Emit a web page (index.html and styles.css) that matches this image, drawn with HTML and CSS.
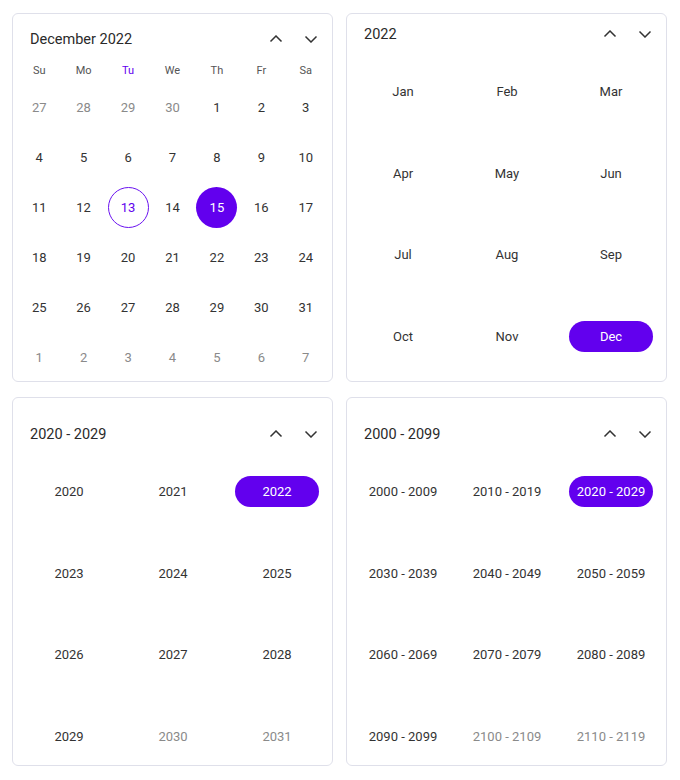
FILE: index.html
```html
<!DOCTYPE html>
<html lang="en">
<head>
<meta charset="utf-8">
<title>Calendars</title>
<link rel="stylesheet" href="styles.css">
</head>
<body>
<div class="board">
  <section class="card">
    <header class="head head-day">
      <span class="title">December 2022</span>
      <div class="nav">
        <button class="nav-btn" aria-label="Previous"><svg viewBox="0 0 14 8" width="14" height="8"><polyline points="1.5,6.5 7,1 12.5,6.5"/></svg></button>
        <button class="nav-btn" aria-label="Next"><svg viewBox="0 0 14 8" width="14" height="8"><polyline points="1.5,1.5 7,7 12.5,1.5"/></svg></button>
      </div>
    </header>
    <div class="weekdays">
      <span>Su</span><span>Mo</span><span class="today-wd">Tu</span><span>We</span><span>Th</span><span>Fr</span><span>Sa</span>
    </div>
    <div class="days">
      <span class="day muted">27</span><span class="day muted">28</span><span class="day muted">29</span><span class="day muted">30</span><span class="day">1</span><span class="day">2</span><span class="day">3</span>
      <span class="day">4</span><span class="day">5</span><span class="day">6</span><span class="day">7</span><span class="day">8</span><span class="day">9</span><span class="day">10</span>
      <span class="day">11</span><span class="day">12</span><span class="day today"><i>13</i></span><span class="day">14</span><span class="day selected"><i>15</i></span><span class="day">16</span><span class="day">17</span>
      <span class="day">18</span><span class="day">19</span><span class="day">20</span><span class="day">21</span><span class="day">22</span><span class="day">23</span><span class="day">24</span>
      <span class="day">25</span><span class="day">26</span><span class="day">27</span><span class="day">28</span><span class="day">29</span><span class="day">30</span><span class="day">31</span>
      <span class="day muted">1</span><span class="day muted">2</span><span class="day muted">3</span><span class="day muted">4</span><span class="day muted">5</span><span class="day muted">6</span><span class="day muted">7</span>
    </div>
  </section>

  <section class="card">
    <header class="head head-month">
      <span class="title">2022</span>
      <div class="nav">
        <button class="nav-btn" aria-label="Previous"><svg viewBox="0 0 14 8" width="14" height="8"><polyline points="1.5,6.5 7,1 12.5,6.5"/></svg></button>
        <button class="nav-btn" aria-label="Next"><svg viewBox="0 0 14 8" width="14" height="8"><polyline points="1.5,1.5 7,7 12.5,1.5"/></svg></button>
      </div>
    </header>
    <div class="cells">
      <span class="cell"><i>Jan</i></span><span class="cell"><i>Feb</i></span><span class="cell"><i>Mar</i></span>
      <span class="cell"><i>Apr</i></span><span class="cell"><i>May</i></span><span class="cell"><i>Jun</i></span>
      <span class="cell"><i>Jul</i></span><span class="cell"><i>Aug</i></span><span class="cell"><i>Sep</i></span>
      <span class="cell"><i>Oct</i></span><span class="cell"><i>Nov</i></span><span class="cell selected"><i>Dec</i></span>
    </div>
  </section>

  <section class="card">
    <header class="head head-year">
      <span class="title">2020 - 2029</span>
      <div class="nav">
        <button class="nav-btn" aria-label="Previous"><svg viewBox="0 0 14 8" width="14" height="8"><polyline points="1.5,6.5 7,1 12.5,6.5"/></svg></button>
        <button class="nav-btn" aria-label="Next"><svg viewBox="0 0 14 8" width="14" height="8"><polyline points="1.5,1.5 7,7 12.5,1.5"/></svg></button>
      </div>
    </header>
    <div class="cells">
      <span class="cell"><i>2020</i></span><span class="cell"><i>2021</i></span><span class="cell selected"><i>2022</i></span>
      <span class="cell"><i>2023</i></span><span class="cell"><i>2024</i></span><span class="cell"><i>2025</i></span>
      <span class="cell"><i>2026</i></span><span class="cell"><i>2027</i></span><span class="cell"><i>2028</i></span>
      <span class="cell"><i>2029</i></span><span class="cell muted"><i>2030</i></span><span class="cell muted"><i>2031</i></span>
    </div>
  </section>

  <section class="card">
    <header class="head head-year">
      <span class="title">2000 - 2099</span>
      <div class="nav">
        <button class="nav-btn" aria-label="Previous"><svg viewBox="0 0 14 8" width="14" height="8"><polyline points="1.5,6.5 7,1 12.5,6.5"/></svg></button>
        <button class="nav-btn" aria-label="Next"><svg viewBox="0 0 14 8" width="14" height="8"><polyline points="1.5,1.5 7,7 12.5,1.5"/></svg></button>
      </div>
    </header>
    <div class="cells">
      <span class="cell"><i>2000 - 2009</i></span><span class="cell"><i>2010 - 2019</i></span><span class="cell selected"><i>2020 - 2029</i></span>
      <span class="cell"><i>2030 - 2039</i></span><span class="cell"><i>2040 - 2049</i></span><span class="cell"><i>2050 - 2059</i></span>
      <span class="cell"><i>2060 - 2069</i></span><span class="cell"><i>2070 - 2079</i></span><span class="cell"><i>2080 - 2089</i></span>
      <span class="cell"><i>2090 - 2099</i></span><span class="cell muted"><i>2100 - 2109</i></span><span class="cell muted"><i>2110 - 2119</i></span>
    </div>
  </section>
</div>
</body>
</html>
```

FILE: styles.css
```css
* { box-sizing: border-box; }

html, body {
  margin: 0;
  padding: 0;
  background: #ffffff;
}

body {
  font-family: Roboto, "Liberation Sans", Arial, sans-serif;
  color: #333333;
}

.board {
  display: grid;
  grid-template-columns: 321px 321px;
  grid-template-rows: 369px 369px;
  column-gap: 13px;
  row-gap: 15px;
  padding: 13px 0 0 12px;
}

.card {
  border: 1px solid #dfe0ea;
  border-radius: 6px;
  background: #fff;
  overflow: hidden;
  display: flex;
  flex-direction: column;
}

.head {
  display: flex;
  align-items: center;
  justify-content: space-between;
  padding-left: 17px;
  padding-right: 9px;
  flex: none;
}

.head-day { height: 46px; padding-top: 4px; }
.head-month { height: 37px; padding-top: 3px; }
.head-year { height: 53px; padding-top: 19px; }

.title {
  font-size: 14.5px;
  color: #2a2a2a;
}

.nav {
  display: flex;
  gap: 11px;
}

.nav-btn {
  width: 24px;
  height: 24px;
  padding: 0;
  border: 0;
  background: transparent;
  display: flex;
  align-items: center;
  justify-content: center;
  cursor: pointer;
}

.nav-btn svg {
  display: block;
  fill: none;
  stroke: #333333;
  stroke-width: 1.5;
  stroke-linecap: butt;
  stroke-linejoin: miter;
}

.weekdays {
  display: grid;
  grid-template-columns: repeat(7, 1fr);
  height: 20px;
  padding: 0 4px;
  align-items: center;
  font-size: 11px;
  color: #555555;
  text-align: center;
  flex: none;
}

.weekdays .today-wd { color: #6200ee; }

.days {
  display: grid;
  grid-template-columns: repeat(7, 1fr);
  grid-auto-rows: 50px;
  padding: 2px 4px 0;
  font-size: 13px;
}

.day {
  display: flex;
  align-items: center;
  justify-content: center;
}

.day i {
  font-style: normal;
  width: 41px;
  height: 41px;
  border-radius: 50%;
  display: flex;
  align-items: center;
  justify-content: center;
}

.day.muted { color: #8a8a8a; }

.day.today i {
  border: 1px solid #6a12f0;
  color: #6200ee;
}

.day.selected i {
  background: #6200ee;
  color: #fff;
}

.cells {
  display: grid;
  grid-template-columns: repeat(3, 1fr);
  grid-auto-rows: 81.5px;
  padding: 0 3px 0 4px;
  font-size: 13px;
}

.cell {
  display: flex;
  align-items: center;
  justify-content: center;
}

.cell i {
  font-style: normal;
  height: 31px;
  min-width: 84px;
  padding: 0 6px;
  border-radius: 16px;
  display: flex;
  align-items: center;
  justify-content: center;
  white-space: nowrap;
}

.cell.muted { color: #8a8a8a; }

.cell.selected i {
  background: #6200ee;
  color: #fff;
}
```
